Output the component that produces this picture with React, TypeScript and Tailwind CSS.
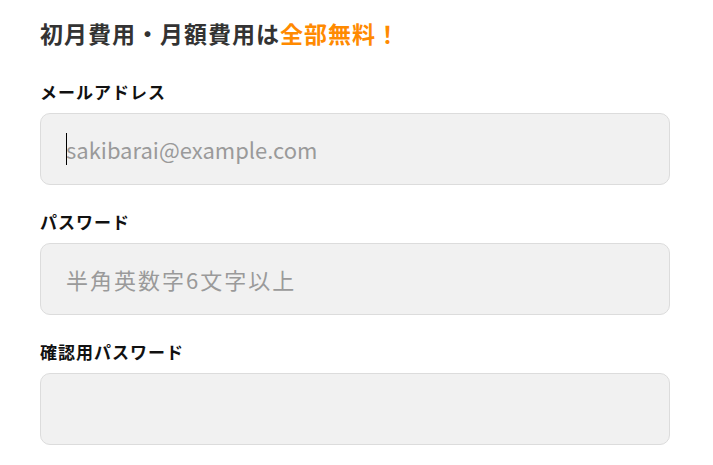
import React from 'react';

const font = { fontFamily: '"Noto Sans CJK JP", "Noto Sans", sans-serif' };

const Field: React.FC<{
  label: string;
  placeholder?: string;
  type?: string;
  caret?: boolean;
  wide?: boolean;
}> = ({ label, placeholder, type = 'text', caret, wide }) => (
  <div className="flex flex-col">
    <label className="text-[17px] font-bold leading-6 tracking-[1px] text-[#111] mb-[9px]">{label}</label>
    <div className="relative">
      <input
        type={type}
        placeholder={placeholder}
        className={
          'h-[72px] w-full rounded-[10px] border border-[#dcdcdc] bg-[#f1f1f1] px-[25px] text-[22px] text-[#333] placeholder:text-[#9a9a9a] outline-none ' +
          (wide ? 'tracking-[2px]' : 'tracking-normal')
        }
      />
      {caret && <span className="absolute left-[26px] top-[20px] h-[32px] w-px bg-black" />}
    </div>
  </div>
);

const App: React.FC = () => {
  return (
    <div className="min-h-screen bg-white" style={font}>
      <div className="w-[630px] ml-[40px] pt-[21px] flex flex-col">
        <h1 className="text-[23px] font-bold leading-6 tracking-[1px] text-[#333] mb-[35px]">
          初月費用・月額費用は<span className="text-[#ff8a00]">全部無料！</span>
        </h1>
        <div className="flex flex-col gap-[25px]">
          <Field label="メールアドレス" placeholder="sakibarai@example.com" type="email" caret />
          <Field label="パスワード" placeholder="半角英数字6文字以上" type="password" wide />
          <Field label="確認用パスワード" type="password" />
        </div>
      </div>
    </div>
  );
};

export default App;
